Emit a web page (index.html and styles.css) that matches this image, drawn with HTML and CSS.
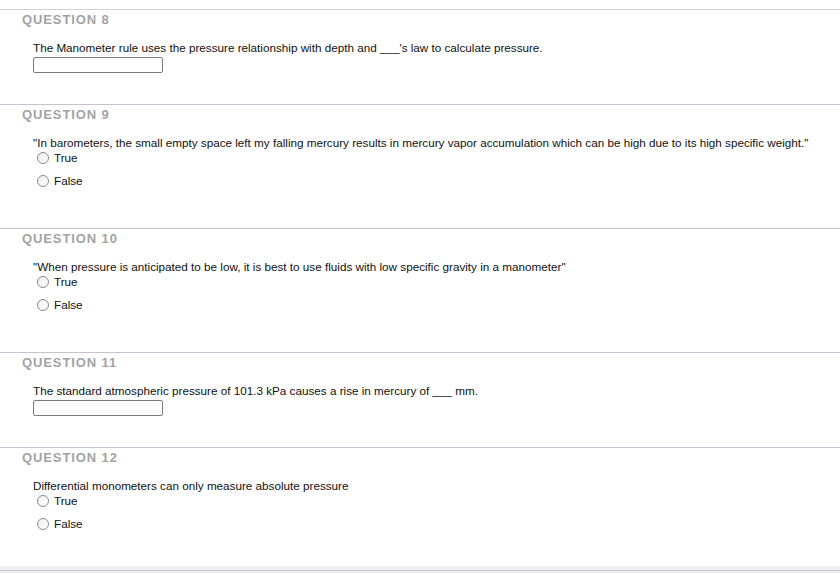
FILE: index.html
```html
<!DOCTYPE html>
<html>
<head>
<meta charset="utf-8">
<link rel="stylesheet" href="styles.css">
</head>
<body>
<div class="page">
  <section class="q q-first">
    <h2 class="q-title">QUESTION 8</h2>
    <div class="q-body short">
      <p class="q-text">The Manometer rule uses the pressure relationship with depth and ___'s law to calculate pressure.</p>
      <span class="blank"></span>
    </div>
  </section>
  <section class="q">
    <h2 class="q-title">QUESTION 9</h2>
    <div class="q-body">
      <p class="q-text">"In barometers, the small empty space left my falling mercury results in mercury vapor accumulation which can be high due to its high specific weight."</p>
      <div class="opt"><span class="radio"></span><span>True</span></div>
      <div class="opt"><span class="radio"></span><span>False</span></div>
    </div>
  </section>
  <section class="q">
    <h2 class="q-title">QUESTION 10</h2>
    <div class="q-body">
      <p class="q-text">"When pressure is anticipated to be low, it is best to use fluids with low specific gravity in a manometer"</p>
      <div class="opt"><span class="radio"></span><span>True</span></div>
      <div class="opt"><span class="radio"></span><span>False</span></div>
    </div>
  </section>
  <section class="q">
    <h2 class="q-title">QUESTION 11</h2>
    <div class="q-body short">
      <p class="q-text">The standard atmospheric pressure of 101.3 kPa causes a rise in mercury of ___ mm.</p>
      <span class="blank"></span>
    </div>
  </section>
  <section class="q">
    <h2 class="q-title">QUESTION 12</h2>
    <div class="q-body last">
      <p class="q-text">Differential monometers can only measure absolute pressure</p>
      <div class="opt"><span class="radio"></span><span>True</span></div>
      <div class="opt"><span class="radio"></span><span>False</span></div>
    </div>
  </section>
  <div class="bottom-band"></div>
</div>
</body>
</html>
```
FILE: styles.css
```css
html, body {
  margin: 0;
  padding: 0;
  background: #fff;
}
body {
  font-family: "Liberation Sans", Arial, sans-serif;
  color: #111;
}
.page {
  padding-top: 9px;
  width: 840px;
}
.q {
  border-top: 1px solid #cdbfd2;
}
.q-first {
  border-top-color: #d2d2d2;
}
.q-title {
  margin: 0;
  padding: 2px 0 0 22px;
  font-size: 13px;
  line-height: 16px;
  font-weight: bold;
  letter-spacing: 0.9px;
  color: #a3a3a3;
}
.q-body {
  padding: 13px 0 0 33px;
  height: 105px;
  box-sizing: border-box;
}
.q-body.short {
  height: 76px;
}
.q-body.last {
  height: 100px;
}
.q-text {
  margin: 0;
  font-size: 11.7px;
  line-height: 14px;
  color: #111;
}
.blank {
  display: block;
  width: 130px;
  height: 16px;
  box-sizing: border-box;
  border: 1px solid #7a7a7a;
  border-radius: 2px;
  margin-top: 2px;
}
.opt {
  display: flex;
  align-items: center;
  height: 23px;
  font-size: 11.7px;
  color: #111;
}
.q-text + .opt {
  margin-top: -4px;
}
.radio {
  width: 12px;
  height: 12px;
  box-sizing: border-box;
  border: 1px solid #8a8a8a;
  border-radius: 50%;
  background: linear-gradient(135deg, #eeeeee, #ffffff);
  margin: 0 5px 0 4px;
}
.bottom-band {
  height: 7px;
  background: linear-gradient(#efefef 0, #f3eef4 4px, #c8c8c8 4px, #c8c8c8 5px, #eceef0 5px);
}
```
